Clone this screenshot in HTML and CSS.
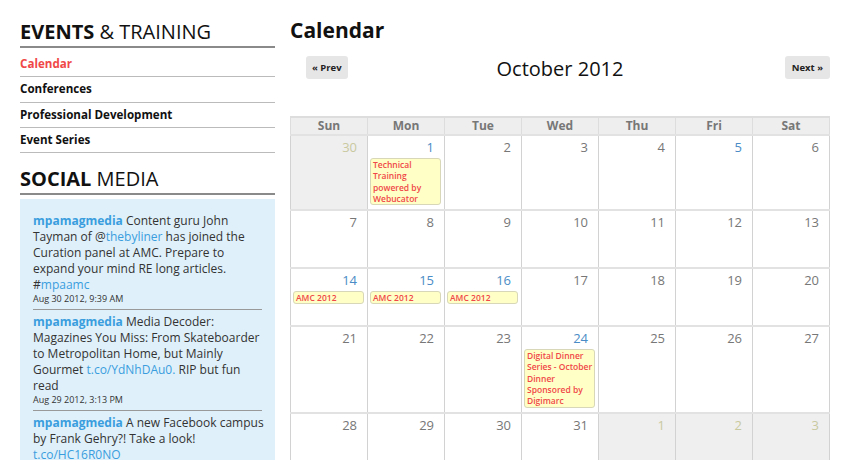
FILE: index.html
```html
<!DOCTYPE html>
<html lang="en">

<head>
    <meta charset="UTF-8">
    <meta name="viewport" content="width=device-width, initial-scale=1.0">
    <title>Calendar</title>
    <link rel="stylesheet" href="styles.css">
</head>

<body>
    <div class="page">
        <aside class="sidebar">
            <h2 class="side-title"><b>EVENTS</b> &amp; TRAINING</h2>
            <ul class="side-nav">
                <li class="active">Calendar</li>
                <li>Conferences</li>
                <li>Professional Development</li>
                <li>Event Series</li>
            </ul>

            <h2 class="side-title social"><b>SOCIAL</b> MEDIA</h2>
            <div class="tweets">
                <div class="tweet">
                    <p><a class="user">mpamagmedia</a> Content guru John Tayman of @<a>thebyliner</a> has joined the Curation panel at AMC. Prepare to expand your mind RE long articles. #<a>mpaamc</a></p>
                    <span class="date">Aug 30 2012, 9:39 AM</span>
                </div>
                <div class="tweet">
                    <p><a class="user">mpamagmedia</a> Media Decoder: Magazines You Miss: From Skateboarder to Metropolitan Home, but Mainly Gourmet <a>t.co/YdNhDAu0.</a> RIP but fun read</p>
                    <span class="date">Aug 29 2012, 3:13 PM</span>
                </div>
                <div class="tweet">
                    <p><a class="user">mpamagmedia</a> A new Facebook campus by Frank Gehry?! Take a look! <a>t.co/HC16R0NO</a></p>
                    <span class="date">Aug 28 2012, 11:02 AM</span>
                </div>
            </div>
        </aside>

        <main class="content">
            <h1>Calendar</h1>

            <div class="cal-toolbar">
                <button class="cal-btn prev">&laquo; Prev</button>
                <span class="cal-month">October 2012</span>
                <button class="cal-btn next">Next &raquo;</button>
            </div>

            <table class="calendar">
                <thead>
                    <tr>
                        <th>Sun</th><th>Mon</th><th>Tue</th><th>Wed</th><th>Thu</th><th>Fri</th><th>Sat</th>
                    </tr>
                </thead>
                <tbody>
                    <tr>
                        <td class="other"><div class="day">30</div></td>
                        <td><div class="day has-event">1</div>
                            <div class="event">Technical Training powered by Webucator</div></td>
                        <td><div class="day">2</div></td>
                        <td><div class="day">3</div></td>
                        <td><div class="day">4</div></td>
                        <td><div class="day has-event">5</div></td>
                        <td><div class="day">6</div></td>
                    </tr>
                    <tr>
                        <td><div class="day">7</div></td>
                        <td><div class="day">8</div></td>
                        <td><div class="day">9</div></td>
                        <td><div class="day">10</div></td>
                        <td><div class="day">11</div></td>
                        <td><div class="day">12</div></td>
                        <td><div class="day">13</div></td>
                    </tr>
                    <tr>
                        <td><div class="day has-event">14</div>
                            <div class="event">AMC 2012</div></td>
                        <td><div class="day has-event">15</div>
                            <div class="event">AMC 2012</div></td>
                        <td><div class="day has-event">16</div>
                            <div class="event">AMC 2012</div></td>
                        <td><div class="day">17</div></td>
                        <td><div class="day">18</div></td>
                        <td><div class="day">19</div></td>
                        <td><div class="day">20</div></td>
                    </tr>
                    <tr>
                        <td><div class="day">21</div></td>
                        <td><div class="day">22</div></td>
                        <td><div class="day">23</div></td>
                        <td><div class="day has-event">24</div>
                            <div class="event">Digital Dinner Series - October Dinner Sponsored by Digimarc</div></td>
                        <td><div class="day">25</div></td>
                        <td><div class="day">26</div></td>
                        <td><div class="day">27</div></td>
                    </tr>
                    <tr>
                        <td><div class="day">28</div></td>
                        <td><div class="day">29</div></td>
                        <td><div class="day">30</div></td>
                        <td><div class="day">31</div></td>
                        <td class="other"><div class="day">1</div></td>
                        <td class="other"><div class="day">2</div></td>
                        <td class="other"><div class="day">3</div></td>
                    </tr>
                </tbody>
            </table>
        </main>
    </div>
</body>

</html>
```

FILE: styles.css
```css
body {
    font-family: "Open Sans", Arial, sans-serif;
    background-color: #fff;
    color: #111;
    margin: 0;
    padding: 0;
}

.page {
    display: flex;
    gap: 15px;
    padding: 17px 20px 0;
}

/* Sidebar */
.sidebar {
    width: 255px;
    flex-shrink: 0;
}

.side-title {
    margin: 2px 0 0;
    font-size: 20px;
    line-height: 26px;
    font-weight: 400;
    padding-bottom: 1px;
    border-bottom: 2px solid #8a8a8a;
}

.side-title b {
    font-weight: 700;
}

.side-title.social {
    margin-top: 13px;
}

.side-nav {
    list-style-type: none;
    margin: 4px 0 0;
    padding: 0;
}

.side-nav li {
    font-size: 11.6px;
    font-weight: 700;
    line-height: 24.3px;
    border-bottom: 1px solid #bbb;
    cursor: pointer;
}

.side-nav li.active {
    color: #f04848;
}

.tweets {
    margin-top: 4px;
    background-color: #dff0fa;
    padding: 14px 10px 0 13px;
    height: 300px;
}

.tweet {
    margin-right: 3px;
    padding: 4px 0 4px;
    border-bottom: 1px solid #999;
}

.tweet:first-child {
    padding-top: 0;
}

.tweet p {
    margin: 0 -3px 0 0;
    font-size: 12px;
    line-height: 16px;
    color: #333;
}

.tweet a {
    color: #3a9ede;
}

.tweet a.user {
    font-weight: 700;
}

.tweet .date {
    display: block;
    font-size: 9px;
    line-height: 12px;
    color: #333;
}

/* Calendar */
.content {
    width: 540px;
}

.content h1 {
    margin: 0;
    font-size: 21px;
    line-height: 26px;
    font-weight: 700;
}

.cal-toolbar {
    display: grid;
    grid-template-columns: 1fr auto 1fr;
    align-items: start;
    margin: 13px 0 36px;
}

.cal-btn {
    font-family: inherit;
    font-size: 9.5px;
    font-weight: 700;
    color: #222;
    background-color: #e6e6e6;
    border: none;
    border-radius: 3px;
    height: 23px;
    padding: 0 6px;
    cursor: pointer;
}

.cal-btn.prev {
    justify-self: start;
    margin-left: 16px;
}

.cal-btn.next {
    justify-self: end;
    padding: 0 7px;
}

.cal-month {
    padding-top: 1px;
    font-size: 20px;
    line-height: 23px;
    color: #111;
}

.calendar {
    width: 540px;
    table-layout: fixed;
    border-collapse: collapse;
}

.calendar th {
    height: 16px;
    padding: 0;
    font-size: 12px;
    line-height: 16px;
    font-weight: 700;
    color: #777;
    background-color: #eee;
    border: 1px solid #ddd;
    border-top-width: 2px;
}

.calendar td {
    height: 52px;
    padding: 0 0 4px;
    vertical-align: top;
    border-left: 1px solid #d2d2d2;
    border-right: 1px solid #d2d2d2;
    border-top: 2px solid #e2e2e2;
}

.calendar td.other {
    background-color: #efefef;
}

.day {
    text-align: right;
    padding: 3px 10px 0;
    font-size: 13px;
    line-height: 17px;
    color: #777;
}

.day.has-event {
    color: #4a8cc6;
}

.other .day {
    color: #c9c9a0;
}

.event {
    margin: 2px 3px 0 2px;
    padding: 0 1px 0 2px;
    font-size: 8.5px;
    line-height: 11.3px;
    font-weight: 600;
    color: #f04848;
    background-color: #ffffc6;
    border: 1px solid #d8d8b8;
    border-radius: 3px;
}
```
